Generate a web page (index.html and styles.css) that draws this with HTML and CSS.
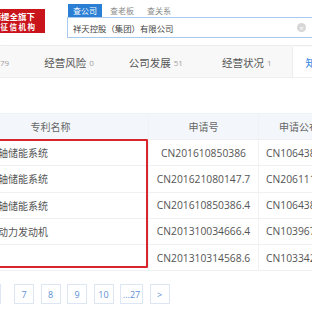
FILE: index.html
```html
<!DOCTYPE html>
<html lang="zh">
<head>
<meta charset="utf-8">
<link rel="stylesheet" href="styles.css">
</head>
<body>
<div class="page">
  <header class="top">
    <div class="badge">
      <div class="badge-l1">源提全旗下</div>
      <div class="badge-l2">征信机构</div>
    </div>
    <div class="search">
      <div class="tabs">
        <span class="tab active">查公司</span>
        <span class="tab">查老板</span>
        <span class="tab">查关系</span>
      </div>
      <div class="input">
        <span class="query">祥天控股（集团）有限公司</span>
        <span class="clear">×</span>
      </div>
    </div>
  </header>

  <nav class="nav">
    <span class="nav-item first"><span class="count">79</span></span>
    <span class="nav-item">经营风险<span class="count">0</span></span>
    <span class="nav-item">公司发展<span class="count">51</span></span>
    <span class="nav-item">经营状况<span class="count">1</span></span>
    <span class="nav-item active">知识产权</span>
  </nav>

  <div class="table-wrap">
    <div class="row head">
      <div class="c1">专利名称</div>
      <div class="c2">申请号</div>
      <div class="c3">申请公布号</div>
    </div>
    <div class="row">
      <div class="c1 name">飞轮轴储能系统</div>
      <div class="c2">CN201610850386</div>
      <div class="c3">CN106438382A</div>
    </div>
    <div class="row">
      <div class="c1 name">飞轮轴储能系统</div>
      <div class="c2">CN201621080147.7</div>
      <div class="c3">CN206111468U</div>
    </div>
    <div class="row">
      <div class="c1 name">飞轮轴储能系统</div>
      <div class="c2">CN201610850386.4</div>
      <div class="c3">CN106438382B</div>
    </div>
    <div class="row">
      <div class="c1 name">混合动力发动机</div>
      <div class="c2">CN201310034666.4</div>
      <div class="c3">CN103967634A</div>
    </div>
    <div class="row">
      <div class="c1 name">电机</div>
      <div class="c2">CN201310314568.6</div>
      <div class="c3">CN103342112A</div>
    </div>
    <div class="highlight"></div>
  </div>

  <div class="pager">
    <span class="pg pg-cut">6</span>
    <span class="pg">7</span>
    <span class="pg">8</span>
    <span class="pg">9</span>
    <span class="pg">10</span>
    <span class="pg wide">...27</span>
    <span class="pg">&gt;</span>
  </div>
</div>
</body>
</html>
```

FILE: styles.css
```css
html, body {
  margin: 0;
  padding: 0;
  background: #fff;
}
body {
  font-family: "Open Sans", "Noto Sans CJK SC", sans-serif;
  color: #555;
  width: 312px;
  height: 312px;
  overflow: hidden;
}
.page {
  width: 312px;
  overflow: hidden;
}

/* top header */
.top {
  display: flex;
  align-items: flex-start;
  height: 45px;
  border-bottom: 1px solid #ececec;
  box-shadow: 0 1px 2px rgba(0,0,0,0.03);
}
.badge {
  width: 45px;
  height: 24px;
  margin-top: 9px;
  background: #c9141c;
  color: #fff;
  overflow: hidden;
  white-space: nowrap;
  text-align: right;
  padding-right: 10px;
  box-sizing: border-box;
  display: flex;
  flex-direction: column;
  align-items: flex-end;
  justify-content: center;
}
.badge-l1 {
  font-size: 8.5px;
  font-weight: bold;
  line-height: 11px;
}
.badge-l2 {
  font-size: 7.5px;
  font-weight: bold;
  letter-spacing: 1.5px;
  line-height: 10px;
  margin-right: -1.5px;
}
.search {
  flex: 1;
  margin-left: 22px;
  margin-top: 4px;
}
.tabs {
  display: flex;
  height: 13px;
  align-items: stretch;
}
.tab {
  font-size: 8px;
  line-height: 13px;
  color: #8a8a8a;
  padding: 0 5px;
  margin-right: 3px;
}
.tab.active {
  background: #2a7ed4;
  color: #fff;
  margin-left: 1px;
}
.input {
  height: 19px;
  border: 1px solid #a9c9ef;
  border-right: none;
  display: flex;
  align-items: center;
  justify-content: space-between;
  padding-left: 5px;
  padding-right: 6px;
}
.query {
  font-size: 8.4px;
  color: #444;
}
.clear {
  width: 9px;
  height: 9px;
  border-radius: 50%;
  background: #d6d6d6;
  color: #fff;
  font-size: 8px;
  line-height: 9px;
  text-align: center;
}

/* nav */
.nav {
  margin-top: 1px;
  height: 30px;
  background: #f8f8f8;
  border-bottom: 1px solid #efefef;
  display: flex;
  align-items: stretch;
  font-size: 10.5px;
  color: #555;
}
.nav-item {
  display: flex;
  align-items: center;
  margin-left: 35px;
  white-space: nowrap;
}
.nav-item.first {
  margin-left: 0;
}
.nav-item:nth-child(4) {
  margin-left: 39px;
}
.count {
  font-size: 8px;
  color: #a0a0a0;
  margin-left: 3px;
}
.nav-item.first .count {
  margin-left: 0;
}
.nav-item.active {
  margin-left: 21px;
  padding-left: 12px;
  background: #fff;
  border-left: 1px solid #ececec;
  color: #2a86e0;
  flex: 1;
}

/* table */
.table-wrap {
  position: relative;
  margin-top: 35px;
  margin-left: -47px;
  width: 400px;
}
.row {
  display: grid;
  grid-template-columns: 196px 110px 94px;
  height: 25.25px;
  border-bottom: 1px solid #f0f0f0;
  font-size: 10px;
  color: #555;
}
.row > div {
  display: flex;
  align-items: center;
  justify-content: center;
  border-right: 1px solid #f0f2f5;
  white-space: nowrap;
  overflow: hidden;
}
.row.head {
  height: 25px;
  background: #f3f7fb;
  border-top: 1px solid #eef2f6;
  color: #666;
}
.row .c2, .row .c3 {
  font-size: 10.3px;
}
.row.head .c2, .row.head .c3 {
  font-size: 10px;
}
.row .c3 {
  justify-content: flex-start;
  padding-left: 7px;
}
.row.head .c3 {
  padding-left: 20px;
}
.row .name {
  justify-content: flex-start;
  padding-left: 25px;
}
.highlight {
  position: absolute;
  left: 0;
  top: 26px;
  width: 195px;
  height: 129px;
  border: 2px solid #d8262e;
  box-sizing: border-box;
  border-radius: 1px;
}

/* pager */
.pager {
  display: flex;
  gap: 6.5px;
  margin-top: 13px;
  margin-left: -19px;
}
.pg {
  width: 20px;
  height: 20px;
  box-sizing: border-box;
  border: 1px solid #dde7f3;
  color: #5b8fd6;
  font-size: 9px;
  display: flex;
  align-items: center;
  justify-content: center;
}
.pg-cut {
  margin-right: 6.5px;
}
.pg.wide {
  width: 23px;
}
```
